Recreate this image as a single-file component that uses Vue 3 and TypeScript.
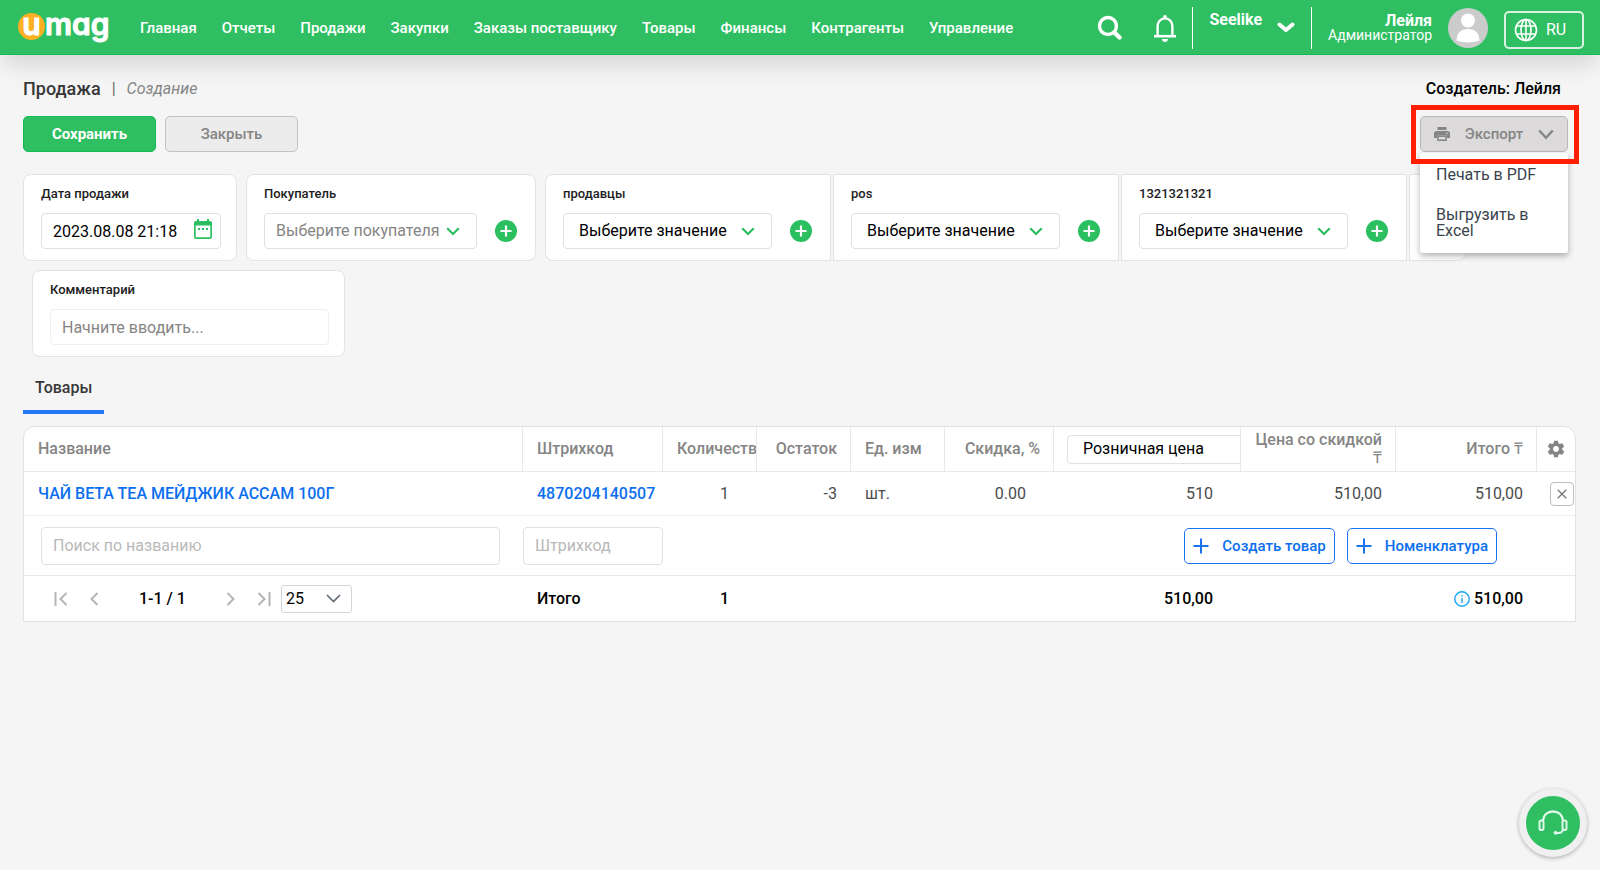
<script setup lang="ts">
import { ref } from 'vue'

interface Segment {
  id: string
  label: string
}

const navItems: string[] = [
  'Главная',
  'Отчеты',
  'Продажи',
  'Закупки',
  'Заказы поставщику',
  'Товары',
  'Финансы',
  'Контрагенты',
  'Управление',
]

const segments: Segment[] = [
  { id: 'sellers', label: 'продавцы' },
  { id: 'pos', label: 'pos' },
  { id: 'custom', label: '1321321321' },
]

const saleDate = ref('2023.08.08 21:18')
const comment = ref('')
const nameQuery = ref('')
const barcodeQuery = ref('')
const pageSize = ref('25')
const menuOpen = ref(true)
</script>

<template>
  <div class="page">
    <header class="topbar">
      <a class="logo" href="#" aria-label="umag"><span class="logo-u">u</span><span class="logo-rest">mag</span></a>
      <nav class="nav">
        <a v-for="item in navItems" :key="item" href="#">{{ item }}</a>
      </nav>
      <div class="tools">
        <button class="icon-btn" type="button" aria-label="Поиск">
          <svg width="26" height="26" viewBox="0 0 26 26" fill="none" stroke="#fff">
            <circle cx="12" cy="11" r="8.5" stroke-width="3.4" />
            <path d="M18.5 17.5L23.5 22.500" stroke-width="4.4" stroke-linecap="round" />
          </svg>
        </button>
        <button class="icon-btn bell" type="button" aria-label="Уведомления">
          <svg width="24" height="28" viewBox="0 0 24 28" fill="none" stroke="#fff" stroke-width="2.4">
            <path d="M4.6 21V12.5C4.6 8 7.5 4.4 12 4.4S19.400 8 19.400 12.500V21" />
            <path d="M1 22.200H23" stroke-width="2.600" />
            <path d="M10.300 4.300V1.800Q12 .2 13.700 1.800V4.300z" fill="#fff" stroke="none" />
            <path d="M9 25H15Q14.600 28 12 28T9 25z" fill="#fff" stroke="none" />
          </svg>
        </button>
        <button class="store" type="button">
          <span>Seelike</span>
          <svg width="18" height="11" viewBox="0 0 18 11" fill="none" stroke="#fff" stroke-width="4" stroke-linecap="round" stroke-linejoin="round"><path d="M2.500 2.500L9 8L15.500 2.500" /></svg>
        </button>
        <div class="user">
          <strong>Лейля</strong>
          <span>Администратор</span>
        </div>
        <svg class="avatar" width="40" height="40" viewBox="0 0 40 40">
          <circle cx="20" cy="20" r="20" fill="#cbcbcb" />
          <circle cx="20" cy="12.500" r="7" fill="#fff" />
          <path d="M8.500 32.500C8.500 25.500 12.500 21 20 21S31.500 25.500 31.500 32.500Q26.500 34.500 20 34.500T8.500 32.500z" fill="#fff" />
        </svg>
        <button class="lang" type="button">
          <svg width="24" height="24" viewBox="0 0 24 24" fill="none" stroke="#fff" stroke-width="1.600">
            <circle cx="12" cy="12" r="10.500" />
            <ellipse cx="12" cy="12" rx="5" ry="10.500" />
            <path d="M12 1.500V22.500M2.500 8H21.500M2.500 16H21.500" />
          </svg>
          <span>RU</span>
        </button>
      </div>
    </header>

    <main class="content">
      <div class="title-row">
        <h1>Продажа</h1>
        <span class="bar">|</span>
        <em>Создание</em>
        <span class="creator">Создатель: Лейля</span>
      </div>

      <div class="actions">
        <button class="btn save" type="button">Сохранить</button>
        <button class="btn close" type="button">Закрыть</button>
        <div class="export-wrap">
          <button class="btn export" type="button" :aria-expanded="menuOpen" @click="menuOpen = !menuOpen">
            <svg width="16" height="16" viewBox="0 0 16 16" fill="#858585">
              <path d="M3.500 1H12.500V4H3.500z" />
              <path fill-rule="evenodd" d="M2.500 5H13.500Q16 5 16 7.500V12H13V9.500H3V12H0V7.500Q0 5 2.500 5zM13 6.500A.8.8 0 1 0 13 8.100A.8.8 0 1 0 13 6.500z" />
              <path fill-rule="evenodd" d="M3.200 9.500H12.800V15H3.200zM4.700 11V13.500H11.300V11z" />
            </svg>
            <span>Экспорт</span>
            <svg width="16" height="11" viewBox="0 0 16 11" fill="none" stroke="#858585" stroke-width="2.400"><path d="M1.200 1.500L8 8.800L14.800 1.500" /></svg>
          </button>
          <ul v-if="menuOpen" class="menu">
            <li><a href="#">Печать в PDF</a></li>
            <li><a href="#">Выгрузить в Excel</a></li>
          </ul>
          <div class="highlight"></div>
        </div>
      </div>

      <form class="filters" @submit.prevent>
        <div class="card">
          <label for="date">Дата продажи</label>
          <div class="field date">
            <input id="date" v-model="saleDate" type="text" />
            <svg width="18" height="20" viewBox="0 0 18 20">
              <path fill="#2bbf60" fill-rule="evenodd" d="M2 2H3V0H5V2H13V0H15V2H16Q18 2 18 4V18Q18 20 16 20H2Q0 20 0 18V4Q0 2 2 2zM1.700 6.500V18.300H16.300V6.500z" />
              <path fill="#2bbf60" d="M4 9H6V11H4zM8 9H10V11H8zM12 9H14V11H12z" />
            </svg>
          </div>
        </div>

        <div class="card">
          <label for="buyer">Покупатель</label>
          <div class="field-row">
            <div class="field pick buyer">
              <select id="buyer"><option>Выберите покупателя</option></select>
              <svg width="14" height="9" viewBox="0 0 14 9"><path d="M1.200 1.200L7 7L12.800 1.200" /></svg>
            </div>
            <button class="add" type="button" aria-label="Добавить покупателя">
              <svg width="22" height="22" viewBox="0 0 22 22"><circle cx="11" cy="11" r="11" /><path d="M11 5.500V16.500M5.500 11H16.500" /></svg>
            </button>
          </div>
        </div>

        <div class="group">
          <div v-for="s in segments" :key="s.id" class="card">
            <label :for="s.id">{{ s.label }}</label>
            <div class="field-row">
              <div class="field pick">
                <select :id="s.id"><option>Выберите значение</option></select>
                <svg width="14" height="9" viewBox="0 0 14 9"><path d="M1.200 1.200L7 7L12.800 1.200" /></svg>
              </div>
              <button class="add" type="button" :aria-label="`Добавить ${s.label}`">
                <svg width="22" height="22" viewBox="0 0 22 22"><circle cx="11" cy="11" r="11" /><path d="M11 5.500V16.500M5.500 11H16.500" /></svg>
              </button>
            </div>
          </div>
          <div class="card stub"></div>
        </div>

        <div class="card comment">
          <label for="comment">Комментарий</label>
          <div class="field">
            <input id="comment" v-model="comment" type="text" placeholder="Начните вводить..." />
          </div>
        </div>
      </form>

      <div class="tabs" role="tablist">
        <button type="button" role="tab" aria-selected="true">Товары</button>
      </div>

      <table class="goods">
        <colgroup>
          <col />
          <col class="w-code" />
          <col class="w-small" />
          <col class="w-small" />
          <col class="w-small" />
          <col class="w-disc" />
          <col class="w-price" />
          <col class="w-dprice" />
          <col class="w-total" />
          <col class="w-gear" />
        </colgroup>
        <thead>
          <tr>
            <th>Название</th>
            <th>Штрихкод</th>
            <th class="clip">Количество</th>
            <th class="right">Остаток</th>
            <th>Ед. изм</th>
            <th class="right">Скидка, %</th>
            <th class="price-head">
              <select aria-label="Тип цены"><option>Розничная цена</option></select>
            </th>
            <th class="right two-line">Цена со скидкой ₸</th>
            <th class="right">Итого ₸</th>
            <th class="gear">
              <button class="plain" type="button" aria-label="Настройки">
                <svg width="20" height="20" viewBox="0 0 24 24" fill="#858585"><path d="M19.430 12.980c.04-.32.07-.64.07-.98s-.03-.66-.07-.98l2.110-1.650c.19-.15.24-.42.12-.64l-2-3.460c-.12-.22-.39-.3-.61-.22l-2.490 1c-.52-.4-1.080-.73-1.690-.98l-.38-2.650C14.460 2.180 14.250 2 14 2h-4c-.25 0-.46.18-.49.42l-.38 2.650c-.61.25-1.170.59-1.690.98l-2.490-1c-.23-.09-.49 0-.61.22l-2 3.460c-.13.22-.07.49.12.64l2.110 1.650c-.04.32-.07.65-.07.98s.03.66.07.98l-2.110 1.650c-.19.15-.24.42-.12.64l2 3.460c.12.22.39.3.61.22l2.490-1c.52.4 1.080.73 1.690.98l.38 2.650c.03.24.24.42.49.42h4c.25 0 .46-.18.49-.42l.38-2.650c.61-.25 1.170-.59 1.690-.98l2.490 1c.23.09.49 0 .61-.22l2-3.460c.12-.22.07-.49-.12-.64l-2.110-1.650zM12 15.500c-1.930 0-3.500-1.570-3.500-3.500s1.570-3.500 3.500-3.500 3.500 1.570 3.500 3.500-1.570 3.500-3.500 3.500z" /></svg>
              </button>
            </th>
          </tr>
        </thead>
        <tbody>
          <tr class="item">
            <td><a href="#">ЧАЙ BETA TEA МЕЙДЖИК АССАМ 100Г</a></td>
            <td><a href="#">4870204140507</a></td>
            <td class="right inset">1</td>
            <td class="right">-3</td>
            <td>шт.</td>
            <td class="right inset">0.00</td>
            <td class="right inset">510</td>
            <td class="right">510,00</td>
            <td class="right">510,00</td>
            <td class="remove">
              <button type="button" aria-label="Удалить">
                <svg width="10" height="10" viewBox="0 0 10 10" fill="none" stroke="#777" stroke-width="1.300"><path d="M.7.7L9.300 9.300M9.300.7L.7 9.300" /></svg>
              </button>
            </td>
          </tr>
          <tr class="search">
            <td class="name-cell"><input v-model="nameQuery" type="text" placeholder="Поиск по названию" aria-label="Поиск по названию" /></td>
            <td class="code-cell"><input v-model="barcodeQuery" type="text" placeholder="Штрихкод" aria-label="Штрихкод" /></td>
            <td colspan="8">
              <div class="create">
                <button type="button"><svg width="16" height="16" viewBox="0 0 16 16"><path d="M8 .5V15.500M.5 8H15.500" /></svg><span>Создать товар</span></button>
                <button type="button"><svg width="16" height="16" viewBox="0 0 16 16"><path d="M8 .5V15.500M.5 8H15.500" /></svg><span>Номенклатура</span></button>
              </div>
            </td>
          </tr>
        </tbody>
        <tfoot>
          <tr>
            <td>
              <div class="pager">
                <button class="plain" type="button" aria-label="Первая"><svg width="14" height="14" viewBox="0 0 14 14"><path d="M1.500 0V14M12.500 1L6.500 7L12.500 13" /></svg></button>
                <button class="plain prev" type="button" aria-label="Назад"><svg width="9" height="14" viewBox="0 0 9 14"><path d="M7.500 1L1.500 7L7.500 13" /></svg></button>
                <span class="range">1-1 / 1</span>
                <button class="plain next" type="button" aria-label="Вперёд"><svg width="9" height="14" viewBox="0 0 9 14"><path d="M1.500 1L7.500 7L1.500 13" /></svg></button>
                <button class="plain" type="button" aria-label="Последняя"><svg width="14" height="14" viewBox="0 0 14 14"><path d="M12.500 0V14M1.500 1L7.500 7L1.500 13" /></svg></button>
                <div class="size">
                  <select v-model="pageSize" aria-label="Строк на странице"><option>25</option></select>
                  <svg width="15" height="9" viewBox="0 0 15 9"><path d="M1 1L7.500 7.500L14 1" /></svg>
                </div>
              </div>
            </td>
            <td>Итого</td>
            <td class="right inset">1</td>
            <td></td>
            <td></td>
            <td></td>
            <td class="right inset">510,00</td>
            <td></td>
            <td class="right">
              <div class="sum">
                <svg width="16" height="16" viewBox="0 0 16 16" fill="none" stroke="#1ba5f5" stroke-width="1.400"><circle cx="8" cy="8" r="7.200" /><path d="M8 7V12M8 4.200V5.800" /></svg>
                <span>510,00</span>
              </div>
            </td>
            <td></td>
          </tr>
        </tfoot>
      </table>
    </main>

    <button class="support" type="button" aria-label="Поддержка">
      <svg width="30" height="26" viewBox="0 0 30 26" fill="none" stroke="#dff8e8" stroke-width="2">
        <path d="M5 10.500C5.500 5 9.500 1.500 15 1.500S24.500 5 25 10.500" stroke-width="2.400" />
        <rect x="1.500" y="10.500" width="4" height="9.500" rx="1.800" />
        <rect x="24.500" y="10.500" width="4" height="9.500" rx="1.800" />
        <path d="M25 20Q24 23 20.500 23H18" />
        <circle cx="17.500" cy="22.800" r="1.500" fill="#dff8e8" stroke-width="1" />
      </svg>
    </button>
  </div>
</template>

<style>
html,
body {
  margin: 0;
  background: #f5f5f5;
}
</style>

<style scoped>
.page,
.page * {
  box-sizing: border-box;
}
.page {
  min-height: 100vh;
  font-family: Roboto, 'Liberation Sans', sans-serif;
  font-size: 16px;
  line-height: 20px;
  color: #000;
  background: #f5f5f5;
}
button,
input,
select {
  font: inherit;
  color: inherit;
}
button {
  padding: 0;
  cursor: pointer;
}
a {
  text-decoration: none;
  color: inherit;
}
svg {
  display: block;
  flex: none;
}

/* Top bar */
.topbar {
  display: flex;
  align-items: center;
  height: 55px;
  padding: 1px 16px 0 18px;
  background: #2fbf62;
  border-bottom: 1px solid #10bd55;
  box-shadow: 0 14px 22px -4px rgba(0, 0, 0, 0.13);
  color: #fff;
}
.logo {
  display: flex;
  align-items: flex-start;
  width: 122px;
  height: 27px;
  margin-bottom: 2px;
  flex: none;
  font-family: Inter, Lato, sans-serif;
  font-feature-settings: 'cv11';
  font-weight: 600;
  font-size: 30px;
  line-height: 22px;
  -webkit-text-stroke: 1px #fff;
}
.logo-u {
  width: 27px;
  height: 27px;
  border-radius: 50%;
  background: #fcb022;
  text-align: center;
}
.nav {
  display: flex;
  gap: 25px;
  font-size: 15px;
  font-weight: 500;
  white-space: nowrap;
}
.tools {
  display: flex;
  align-items: center;
  margin-left: auto;
}
.icon-btn {
  border: 0;
  background: none;
}
.bell {
  margin: 0 15px 0 31px;
}
.store {
  display: flex;
  align-items: center;
  gap: 15px;
  height: 42px;
  padding: 0 16px;
  border: solid #fff;
  border-width: 0 1px;
  background: none;
  font-weight: 700;
}
.store span {
  align-self: flex-start;
  line-height: 26px;
}
.user {
  display: flex;
  flex-direction: column;
  align-items: flex-end;
  padding-left: 16px;
  line-height: 15px;
}
.user span {
  font-size: 14px;
}
.avatar {
  margin: 0 16px;
}
.lang {
  display: flex;
  align-items: center;
  gap: 8px;
  width: 80px;
  height: 38px;
  margin-top: 4px;
  padding-left: 8px;
  border: 2px solid #d9f2e2;
  border-radius: 5px;
  background: none;
}

/* Title and actions */
.content {
  padding: 23px 24px 0 23px;
}
.title-row {
  display: flex;
  align-items: center;
  line-height: 22px;
}
h1 {
  margin: 0;
  font-size: 18px;
  font-weight: 500;
  color: #383838;
}
.bar {
  margin: 0 11px;
  color: #666;
}
em {
  color: #858585;
}
.creator {
  margin: 0 15px 0 auto;
  font-weight: 500;
}
.actions {
  display: flex;
  gap: 9px;
  margin-top: 16px;
}
.btn {
  width: 133px;
  height: 36px;
  border: 1px solid #10bd55;
  border-radius: 5px;
  font-size: 15px;
  font-weight: 500;
}
.save {
  background: #2fbf62;
  color: #fff;
  font-weight: 700;
}
.close {
  border-color: #c2c2c2;
  background: #ececec;
  color: #858585;
}
.export-wrap {
  position: relative;
  width: 148px;
  margin: 0 8px 0 auto;
}
.export {
  display: flex;
  align-items: center;
  justify-content: space-between;
  width: 100%;
  padding: 0 13px;
  border-color: #b9b7b7;
  background: #dddadb;
  color: #858585;
}
.menu {
  position: absolute;
  z-index: 2;
  top: 37px;
  left: 0;
  width: 148px;
  margin: 0;
  padding: 2px 0 0;
  border-radius: 3px;
  background: #fff;
  box-shadow: 0 3px 6px rgba(0, 0, 0, 0.3);
  list-style: none;
  color: #3a444c;
  line-height: 16px;
}
.menu li {
  padding: 12px 16px;
}
.menu li:last-child {
  padding-bottom: 14px;
}
.highlight {
  position: absolute;
  z-index: 3;
  inset: -11px -11px -12px -9px;
  border: 5px solid #ff1f00;
  pointer-events: none;
}

/* Filter cards */
.filters {
  display: flex;
  flex-wrap: wrap;
  row-gap: 9px;
  margin-top: 22px;
}
.card {
  height: 87px;
  padding: 11px 15px 0 17px;
  border: 1px solid #e3e3e3;
  border-radius: 8px;
  background: #fff;
}
.filters > :not(:first-child) {
  margin-left: 9px;
}
.card label {
  display: block;
  margin-bottom: 11px;
  font-size: 13px;
  line-height: 16px;
  font-weight: 500;
  color: #1c1c1c;
}
.field {
  position: relative;
  width: 209px;
  height: 36px;
}
.field input,
.field select {
  width: 100%;
  height: 100%;
  padding: 0 11px;
  border: 1px solid #e0e0e0;
  border-radius: 4px;
  background: #fff;
  appearance: none;
  outline: none;
}
.field.pick select {
  padding: 0 15px;
}
.field svg {
  position: absolute;
  right: 17px;
  top: 14px;
  pointer-events: none;
}
.field.pick svg path {
  fill: none;
  stroke: #2bbf60;
  stroke-width: 2.2;
}
.field.date {
  width: 180px;
}
.field.date svg {
  right: 9px;
  top: 6px;
}
.field.buyer {
  width: 213px;
}
.field.buyer select {
  padding: 0 11px;
  color: #858585;
}
.field-row {
  display: flex;
  align-items: center;
  gap: 18px;
  padding-right: 3px;
}
.add {
  border: 0;
  background: none;
}
.add circle {
  fill: #2bbf60;
}
.add path {
  stroke: #fff;
  stroke-width: 2.2;
}
.group {
  display: flex;
  gap: 2px;
}
.group .card {
  border-radius: 0;
}
.group .card:first-child {
  border-radius: 8px 0 0 8px;
}
.group .stub {
  width: 57px;
  border-radius: 0 8px 8px 0;
}
.comment .field {
  width: 279px;
}
.comment input {
  border-color: #efefef;
}
input::placeholder {
  color: #858585;
  opacity: 1;
}

/* Tabs */
.tabs {
  margin-top: 20px;
}
.tabs button {
  display: block;
  height: 37px;
  padding: 0 12px 11px;
  border: 0;
  border-bottom: 4px solid #2276f2;
  border-radius: 3px 3px 0 0;
  background: none;
  font-weight: 500;
  color: #383838;
}

/* Table */
.goods {
  width: 100%;
  margin-top: 12px;
  table-layout: fixed;
  border-collapse: separate;
  border-spacing: 0;
  border: 1px solid #e2e2e2;
  border-radius: 12px 12px 0 0;
  background: #fff;
}
.w-code {
  width: 140px;
}
.w-small {
  width: 94px;
}
.w-disc {
  width: 109px;
}
.w-price {
  width: 187px;
}
.w-dprice {
  width: 155px;
}
.w-total {
  width: 141px;
}
.w-gear {
  width: 38px;
}
.goods th,
.goods td {
  padding: 0 14px;
  text-align: left;
  white-space: nowrap;
}
.goods th {
  height: 45px;
  border-right: 1px solid #e6e8ea;
  border-bottom: 1px solid #e6e8ea;
  font-weight: 500;
  color: #858585;
}
.goods th:last-child {
  border-right: 0;
}
.goods .right {
  text-align: right;
}
.goods th.right {
  padding-right: 13px;
}
.goods .clip {
  overflow: hidden;
}
.goods .two-line {
  white-space: normal;
  line-height: 18px;
}
.goods .inset {
  padding-right: 28px;
}
.goods .price-head {
  padding-left: 13px;
  overflow: hidden;
}
.price-head select {
  display: block;
  width: 200px;
  height: 29px;
  padding: 0 15px;
  border: 1px solid #e0e0e0;
  border-radius: 4px;
  background: #fff;
  appearance: none;
  font-weight: 400;
  color: #000;
}
.plain {
  border: 0;
  background: none;
}
.goods .gear {
  padding: 0 9px;
}
.gear button {
  display: block;
}
.item td {
  height: 44px;
  border-bottom: 1px solid #f0f0f0;
  color: #4c4c4c;
}
.item a {
  font-weight: 500;
  color: #0d6ff0;
}
.goods .remove {
  padding: 0 0 0 13px;
}
.remove button {
  display: grid;
  place-items: center;
  width: 24px;
  height: 24px;
  border: 1px solid #bdbdbd;
  border-radius: 4px;
  background: #fff;
}
.search td {
  height: 60px;
  border-bottom: 1px solid #e8e8e8;
}
.goods .name-cell {
  padding: 0 23px 0 17px;
}
.goods .code-cell {
  padding: 0;
}
.search input {
  display: block;
  width: 100%;
  height: 38px;
  padding: 0 11px;
  border: 1px solid #e0e0e0;
  border-radius: 4px;
  background: #fff;
  outline: none;
}
.search input::placeholder {
  color: #b9b9b9;
}
.create {
  display: flex;
  justify-content: flex-end;
  gap: 12px;
  padding-right: 64px;
}
.create button {
  display: flex;
  align-items: center;
  gap: 13px;
  height: 36px;
  padding: 0 8px;
  border: 1px solid #1b72ee;
  border-radius: 5px;
  background: #fff;
  color: #0d6ff0;
  font-size: 15px;
  font-weight: 500;
}
.create path {
  stroke: #1b72ee;
  stroke-width: 2;
}
tfoot td {
  height: 45px;
  font-weight: 500;
}
.pager {
  display: flex;
  align-items: center;
  padding-left: 16px;
}
.pager path {
  fill: none;
  stroke: #b5b5b5;
  stroke-width: 2;
}
.prev {
  margin: 0 40px 0 22px;
}
.next {
  margin: 0 22px 0 40px;
}
.size {
  position: relative;
  width: 71px;
  height: 28px;
  margin-left: 10px;
}
.size select {
  width: 100%;
  height: 100%;
  padding: 0 4px;
  border: 1px solid #cfd6dc;
  border-radius: 3px;
  background: #fff;
  appearance: none;
  font-weight: 400;
}
.size svg {
  position: absolute;
  right: 11px;
  top: 9px;
  pointer-events: none;
}
.size path {
  stroke: #5f6a73;
  stroke-width: 1.6;
}
.sum {
  display: flex;
  align-items: center;
  justify-content: flex-end;
  gap: 4px;
}

/* Support button */
.support {
  position: fixed;
  right: 13px;
  bottom: 13px;
  display: grid;
  place-items: center;
  width: 68px;
  height: 68px;
  border: 7px solid #f0f0f0;
  border-radius: 50%;
  background: #2fbf62;
  box-shadow: 0 1px 4px rgba(0, 0, 0, 0.3);
}
</style>
